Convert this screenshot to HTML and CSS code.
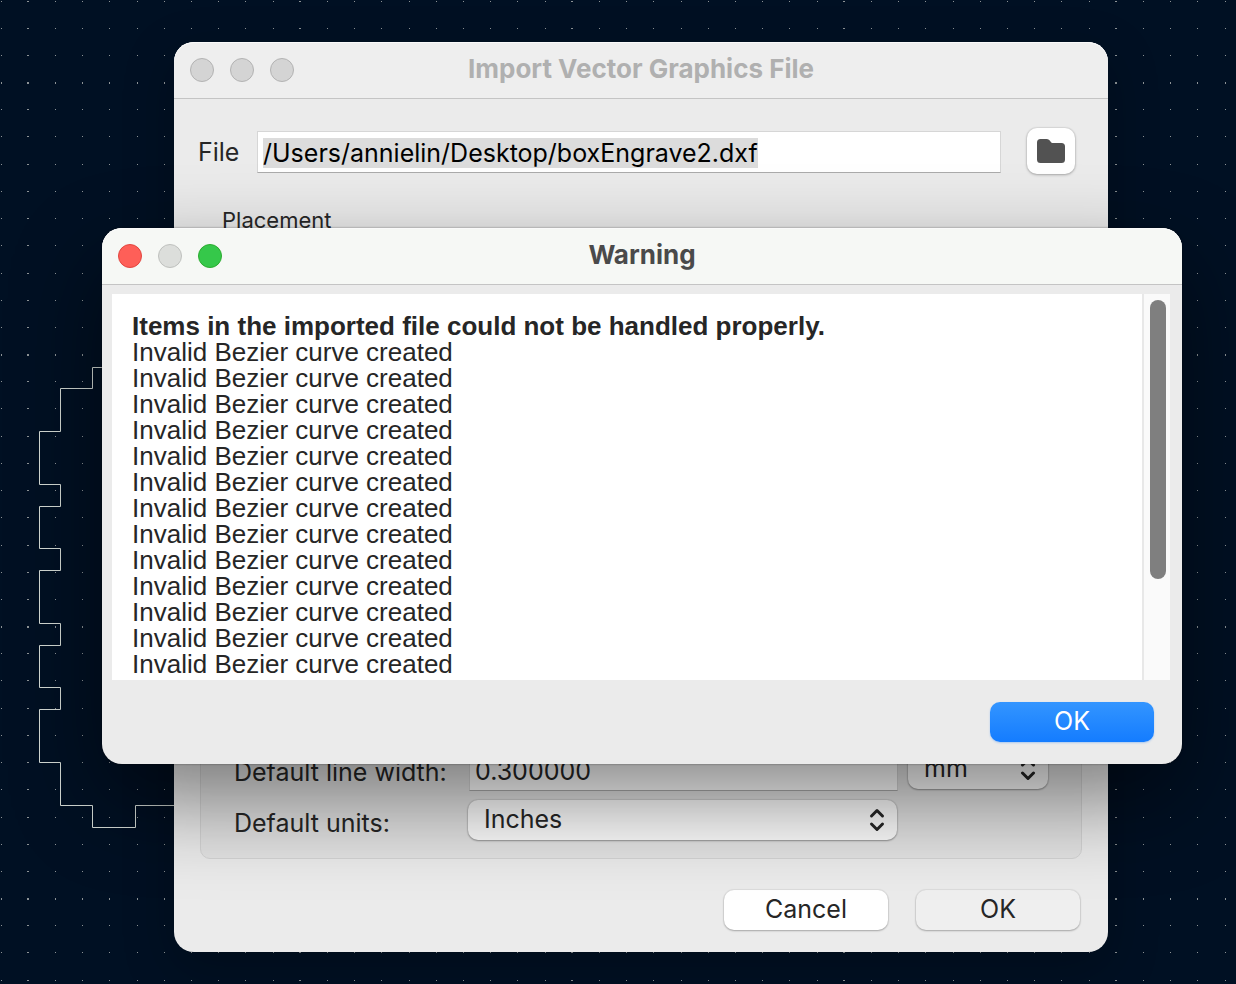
FILE: index.html
```
<!DOCTYPE html>
<html lang="en">
<head>
<meta charset="utf-8">
<title>Import Vector Graphics File</title>
<link rel="stylesheet" href="styles.css">
</head>
<body>
<main class="desktop">
  <svg class="canvas" aria-hidden="true">
    <defs>
      <pattern id="dots" width="272" height="272" patternUnits="userSpaceOnUse">
        <g stroke="#8d9396" stroke-width="1">
          <g id="dotrow"><path d="M1 1.500h1M27 1.500h2M55 1.500h1M82 1.500h1M109 1.500h1M137 1.500h1M164 1.500h1M191 1.500h1M218 1.500h1M245 1.500h1"/></g>
          <use href="#dotrow" y="27"/><use href="#dotrow" y="54"/>
          <use href="#dotrow" y="81"/><use href="#dotrow" y="82"/>
          <use href="#dotrow" y="108"/><use href="#dotrow" y="135"/>
          <use href="#dotrow" y="163"/><use href="#dotrow" y="190"/>
          <use href="#dotrow" y="217"/><use href="#dotrow" y="244"/>
        </g>
      </pattern>
    </defs>
    <rect width="100%" height="100%" fill="url(#dots)"/>
    <path fill="none" stroke="#d4dad5" d="M110.500 367.500H92.500V388.500H60.500V431.500H39.500V484.500H60.500V506.500H39.500V548.500H60.500V570.500H39.500V623.500H60.500V645.500H39.500V687.500H60.500V709.500H39.500V762.500H60.500V805.500H92.500V827.500H135.500V805.500H180"/>
  </svg>

  <section class="window import" aria-labelledby="import-title">
    <header class="titlebar">
      <div class="lights">
        <button class="light" aria-label="Close"></button>
        <button class="light" aria-label="Minimize"></button>
        <button class="light" aria-label="Zoom"></button>
      </div>
      <h2 class="title" id="import-title">Import Vector Graphics File</h2>
    </header>
    <form class="import-body">
      <div class="file-row">
        <label class="file-label" for="file">File</label>
        <input class="field file-input" id="file" type="text" value="/Users/annielin/Desktop/boxEngrave2.dxf" autofocus spellcheck="false">
        <button class="browse" type="button" aria-label="Browse">
          <svg width="28" height="24" viewBox="0 0 28 24"><path fill="#525252" d="M3.500 0H9.500C11.500 0 12.500 1 13.500 2.500C14.200 3.600 15 4 16 4H24.500Q28 4 28 7.500V20.500Q28 24 24.500 24H3.500Q0 24 0 20.500V3.500Q0 0 3.500 0Z"/></svg>
        </button>
      </div>
      <div class="group-label">Placement</div>
      <div class="group">
        <div class="grid">
          <label for="width">Default line width:</label>
          <input class="field" id="width" type="text" value="0.300000">
          <div class="select-wrap">
            <select class="select" aria-label="Line width units"><option>mm</option></select>
            <svg class="chevrons" width="16" height="24" viewBox="0 0 16 24"><path d="M2.500 8 8 2.500 13.500 8M2.500 16 8 21.500 13.500 16"/></svg>
          </div>
          <label for="units">Default units:</label>
          <div class="select-wrap">
            <select class="select" id="units"><option>Inches</option></select>
            <svg class="chevrons" width="16" height="24" viewBox="0 0 16 24"><path d="M2.500 8 8 2.500 13.500 8M2.500 16 8 21.500 13.500 16"/></svg>
          </div>
        </div>
      </div>
      <footer class="actions">
        <button class="button" type="button">Cancel</button>
        <button class="button muted" type="button">OK</button>
      </footer>
    </form>
  </section>

  <section class="window warning" role="alertdialog" aria-labelledby="warning-title">
    <header class="titlebar">
      <div class="lights">
        <button class="light red" aria-label="Close"></button>
        <button class="light" aria-label="Minimize"></button>
        <button class="light green" aria-label="Zoom"></button>
      </div>
      <h2 class="title" id="warning-title">Warning</h2>
    </header>
    <div class="report">
      <div class="messages">
        <strong>Items in the imported file could not be handled properly.</strong>
        <p>Invalid Bezier curve created</p>
        <p>Invalid Bezier curve created</p>
        <p>Invalid Bezier curve created</p>
        <p>Invalid Bezier curve created</p>
        <p>Invalid Bezier curve created</p>
        <p>Invalid Bezier curve created</p>
        <p>Invalid Bezier curve created</p>
        <p>Invalid Bezier curve created</p>
        <p>Invalid Bezier curve created</p>
        <p>Invalid Bezier curve created</p>
        <p>Invalid Bezier curve created</p>
        <p>Invalid Bezier curve created</p>
        <p>Invalid Bezier curve created</p>
      </div>
      <div class="track"><div class="thumb"></div></div>
    </div>
    <footer class="actions">
      <button class="button primary" type="button">OK</button>
    </footer>
  </section>
</main>
<script src="script.js"></script>
</body>
</html>
```
FILE: styles.css
```
* { box-sizing: border-box; }
body {
  margin: 0;
  font: 25px/32px Inter, "Liberation Sans", sans-serif;
  color: #262626;
}
button, input, select { font: inherit; color: inherit; }
h2, p { margin: 0; }

.desktop {
  position: relative;
  min-height: 100vh;
  overflow: hidden;
  background: #001023;
}
.canvas { position: absolute; inset: 0; width: 100%; height: 100%; }

.window {
  position: absolute;
  display: flex;
  flex-direction: column;
  border-radius: 20px;
  background: #ebebeb;
}
.import {
  top: 42px; left: 174px; right: 128px;
  min-height: 910px;
  box-shadow: 0 16px 50px rgba(0, 0, 0, .25);
}
.warning {
  top: 228px; left: 102px; right: 54px;
  box-shadow: 0 0 2px rgba(0, 0, 0, .5), 0 36px 90px rgba(0, 0, 0, .48);
}

.titlebar {
  display: grid;
  grid-template-columns: 120px 1fr 120px;
  align-items: center;
  height: 57px;
  border-bottom: 1px solid #c4c4c4;
  border-radius: 20px 20px 0 0;
  background: #eeeeee;
  box-shadow: inset 0 1px #fafafa;
}
.warning .titlebar { background: #f6f8f5; }
.title {
  padding-bottom: 2px;
  text-align: center;
  font-size: 26px;
  font-weight: 700;
  line-height: 32px;
  color: #b0b0b0;
}
.warning .title { color: #4a4a4a; }
.lights { display: flex; gap: 16px; padding-left: 16px; }
.light {
  width: 24px; height: 24px;
  padding: 0;
  border: 1px solid #b3b3b3;
  border-radius: 50%;
  background: #d4d4d4;
}
.warning .light { background: #dcdedb; border-color: #bfc1be; }
.warning .red { background: #fe5f58; border-color: #e2463f; }
.warning .green { background: #35c84a; border-color: #2bac2f; }

.import-body { flex: 1; display: flex; flex-direction: column; padding-top: 29px; }
.file-row { display: flex; align-items: center; padding: 0 33px 0 24px; }
.file-label { width: 59px; padding-top: 2px; }
.field {
  min-width: 0;
  height: 42px;
  padding: 2px 5px 0;
  border: 1px solid #d6d6d6;
  border-bottom-color: #ababab;
  border-radius: 0;
  outline: 0;
  background: #fff;
}
.file-input { flex: 1; margin: 1px 26px 0 0; color: #000; }
.field::selection { background: #dcdcdc; color: #000; }
.browse {
  display: grid;
  place-items: center;
  width: 48px; height: 46px;
  padding: 0;
  border: 0;
  border-radius: 10px;
  background: #fff;
  box-shadow: 0 0 1px 1px rgba(0, 0, 0, .06), 0 1px 3px rgba(0, 0, 0, .25);
}
.group-label { padding: 30px 48px 8px; font-size: 22px; }
.group {
  flex: 1;
  display: flex;
  align-items: flex-end;
  margin: 0 26px;
  padding: 0 33px 18px;
  border: 1px solid #d4d4d4;
  border-radius: 10px;
  background: #e3e3e3;
}
.grid {
  flex: 1;
  display: grid;
  grid-template-columns: 233px minmax(0, 428px) 140px;
  column-gap: 10px;
  row-gap: 9px;
}
.grid label { padding-top: 7px; margin-right: -10px; }
.grid .field { margin-left: -8px; }
.grid .select-wrap { margin: 0 1px 0 -9px; }
.grid .select-wrap:nth-child(3) { margin: 0; }
.select-wrap { position: relative; height: 40px; }
.select {
  appearance: none;
  width: 100%; height: 40px;
  padding: 0 16px 2px;
  border: 0;
  border-radius: 10px;
  background: #fdfdfd;
  box-shadow: 0 0 1px 1px rgba(0, 0, 0, .08), 0 1px 2px rgba(0, 0, 0, .3);
}
.chevrons {
  position: absolute;
  right: 12px; top: 8px;
  fill: none;
  stroke: #262626;
  stroke-width: 3;
  stroke-linecap: round;
  stroke-linejoin: round;
  pointer-events: none;
}

.actions { display: flex; justify-content: flex-end; gap: 28px; padding: 31px 28px 22px; }
.warning .actions { padding-top: 22px; }
.button {
  width: 164px; height: 40px;
  padding: 0 0 2px;
  border: 0;
  border-radius: 10px;
  background: #fff;
  box-shadow: 0 0 1px 1px rgba(0, 0, 0, .06), 0 1px 2px rgba(0, 0, 0, .25);
}
.muted { background: #efefef; }
.primary {
  color: #fff;
  background: linear-gradient(#3395ff, #147cff);
  box-shadow: 0 1px 2px rgba(20, 124, 255, .3);
}

.report {
  display: flex;
  height: 386px;
  margin: 9px 12px 0 10px;
  background: #fff;
}
.messages {
  flex: 1;
  overflow: hidden;
  padding: 19px 20px 0;
  font: 26px/26px "Liberation Sans", Arial, sans-serif;
}
.messages strong { display: block; }
.track {
  width: 28px;
  padding: 6px 4px 0 6px;
  border-left: 2px solid #e8e8e8;
  background: #fafafa;
}
.thumb { width: 16px; height: 279px; border-radius: 8px; background: #7f7f7f; }
```
FILE: script.js
```
const file = document.getElementById("file");
file.focus();
file.select();
```
